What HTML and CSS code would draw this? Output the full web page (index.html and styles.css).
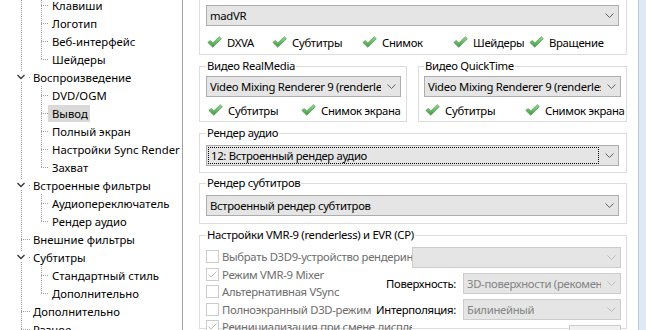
FILE: index.html
```html
<!DOCTYPE html>
<html>
<head>
    <title>Вывод</title>
    <link rel="stylesheet" href="styles.css">
</head>
<body>
    <svg class="defs" width="0" height="0">
        <defs>
            <linearGradient id="tickFill" x1="0" y1="0" x2="0" y2="1">
                <stop offset="0" stop-color="#93d893"/>
                <stop offset="1" stop-color="#409c40"/>
            </linearGradient>
            <symbol id="tick" viewBox="0 0 15 12">
                <path d="M0.8 6.4 L3.3 4.4 L5.8 6.9 L12.3 0.7 L14.4 2.7 L5.8 11.3 Z" fill="url(#tickFill)" stroke="#3f8f3f" stroke-width="0.6" stroke-linejoin="round"/>
            </symbol>
            <symbol id="arrow" viewBox="0 0 9 5">
                <path d="M0.5 0.5 L4.5 4.5 L8.5 0.5" fill="none" stroke="currentColor" stroke-width="1"/>
            </symbol>
            <symbol id="expand" viewBox="0 0 13 10">
                <path d="M2.5 3 L6 6.5 L9.5 3" fill="none" stroke="#3a3a3a" stroke-width="1.4"/>
            </symbol>
        </defs>
    </svg>

    <div class="tree">
        <div class="tree-list">
            <div class="row"><span class="guide lv1 pass"></span><span class="guide lv2 tee"></span><span class="item">Клавиши</span></div>
            <div class="row"><span class="guide lv1 pass"></span><span class="guide lv2 tee"></span><span class="item">Логотип</span></div>
            <div class="row"><span class="guide lv1 pass"></span><span class="guide lv2 tee"></span><span class="item">Веб-интерфейс</span></div>
            <div class="row"><span class="guide lv1 pass"></span><span class="guide lv2 end"></span><span class="item">Шейдеры</span></div>
            <div class="row"><span class="guide lv1 tee"><svg class="exp"><use href="#expand"/></svg></span><span class="item top">Воспроизведение</span></div>
            <div class="row"><span class="guide lv1 pass"></span><span class="guide lv2 tee"></span><span class="item">DVD/OGM</span></div>
            <div class="row"><span class="guide lv1 pass"></span><span class="guide lv2 tee"></span><span class="item selected">Вывод</span></div>
            <div class="row"><span class="guide lv1 pass"></span><span class="guide lv2 tee"></span><span class="item">Полный экран</span></div>
            <div class="row"><span class="guide lv1 pass"></span><span class="guide lv2 tee"></span><span class="item">Настройки Sync Render</span></div>
            <div class="row"><span class="guide lv1 pass"></span><span class="guide lv2 end"></span><span class="item">Захват</span></div>
            <div class="row"><span class="guide lv1 tee"><svg class="exp"><use href="#expand"/></svg></span><span class="item top">Встроенные фильтры</span></div>
            <div class="row"><span class="guide lv1 pass"></span><span class="guide lv2 tee"></span><span class="item">Аудиопереключатель</span></div>
            <div class="row"><span class="guide lv1 pass"></span><span class="guide lv2 end"></span><span class="item">Рендер аудио</span></div>
            <div class="row"><span class="guide lv1 tee"></span><span class="item top">Внешние фильтры</span></div>
            <div class="row"><span class="guide lv1 tee"><svg class="exp"><use href="#expand"/></svg></span><span class="item top">Субтитры</span></div>
            <div class="row"><span class="guide lv1 pass"></span><span class="guide lv2 tee"></span><span class="item">Стандартный стиль</span></div>
            <div class="row"><span class="guide lv1 pass"></span><span class="guide lv2 end"></span><span class="item">Дополнительно</span></div>
            <div class="row"><span class="guide lv1 tee"></span><span class="item top">Дополнительно</span></div>
            <div class="row"><span class="guide lv1 tee"></span><span class="item top">Разное</span></div>
        </div>
    </div>

    <div class="page">
        <fieldset class="group first">
            <legend>Видео DirectShow</legend>
            <div class="combo"><span class="val">madVR</span><svg class="arrow"><use href="#arrow"/></svg></div>
            <div class="checks five">
                <span class="ok"><svg class="tick"><use href="#tick"/></svg>DXVA</span>
                <span class="ok"><svg class="tick"><use href="#tick"/></svg>Субтитры</span>
                <span class="ok"><svg class="tick"><use href="#tick"/></svg>Снимок</span>
                <span class="ok"><svg class="tick"><use href="#tick"/></svg>Шейдеры</span>
                <span class="ok"><svg class="tick"><use href="#tick"/></svg>Вращение</span>
            </div>
        </fieldset>

        <div class="pair">
            <fieldset class="group half">
                <legend>Видео RealMedia</legend>
                <div class="combo"><span class="val">Video Mixing Renderer 9 (renderless)</span><svg class="arrow"><use href="#arrow"/></svg></div>
                <div class="checks two rm">
                    <span class="ok"><svg class="tick"><use href="#tick"/></svg>Субтитры</span>
                    <span class="ok"><svg class="tick"><use href="#tick"/></svg>Снимок экрана</span>
                </div>
            </fieldset>
            <fieldset class="group half qt">
                <legend>Видео QuickTime</legend>
                <div class="combo"><span class="val">Video Mixing Renderer 9 (renderless)</span><svg class="arrow"><use href="#arrow"/></svg></div>
                <div class="checks two">
                    <span class="ok"><svg class="tick"><use href="#tick"/></svg>Субтитры</span>
                    <span class="ok"><svg class="tick"><use href="#tick"/></svg>Снимок экрана</span>
                </div>
            </fieldset>
        </div>

        <fieldset class="group single audio">
            <legend>Рендер аудио</legend>
            <div class="combo focused"><span class="val">12: Встроенный рендер аудио</span><svg class="arrow"><use href="#arrow"/></svg></div>
        </fieldset>

        <fieldset class="group single subs">
            <legend>Рендер субтитров</legend>
            <div class="combo"><span class="val">Встроенный рендер субтитров</span><svg class="arrow"><use href="#arrow"/></svg></div>
        </fieldset>

        <fieldset class="group vmr">
            <legend>Настройки VMR-9 (renderless) и EVR (CP)</legend>
            <div class="vmr-grid">
                <div class="cb-list">
                    <div class="cb"><span class="box"></span>Выбрать D3D9-устройство рендеринга</div>
                    <div class="cb"><span class="box"><svg class="mark" viewBox="0 0 11 11"><path d="M1.5 5.5 L4 8 L9.5 2.5" fill="none" stroke="#bcbcbc" stroke-width="1"/></svg></span>Режим VMR-9 Mixer</div>
                    <div class="cb"><span class="box"></span>Альтернативная VSync</div>
                    <div class="cb"><span class="box"></span>Полноэкранный D3D-режим</div>
                    <div class="cb"><span class="box"><svg class="mark" viewBox="0 0 11 11"><path d="M1.5 5.5 L4 8 L9.5 2.5" fill="none" stroke="#bcbcbc" stroke-width="1"/></svg></span>Реинициализация при смене дисплея</div>
                </div>
                <div class="opts">
                    <div class="combo off"><span class="val"></span><svg class="arrow"><use href="#arrow"/></svg></div>
                    <div class="opt">
                        <span class="opt-label">Поверхность:</span>
                        <div class="combo off"><span class="val">3D-поверхности (рекомендуется)</span><svg class="arrow"><use href="#arrow"/></svg></div>
                    </div>
                    <div class="opt">
                        <span class="opt-label">Интерполяция:</span>
                        <div class="combo off"><span class="val">Билинейный</span><svg class="arrow"><use href="#arrow"/></svg></div>
                    </div>
                    <div class="opt buffers">
                        <span class="opt-label faint">Буферы EVR:</span>
                        <div class="spin"></div>
                    </div>
                </div>
            </div>
        </fieldset>
    </div>

    <div class="edge"></div>
</body>
</html>
```

FILE: styles.css
```css
/* Options dialog, "Вывод" page */
body {
    margin: 0;
    width: 646px;
    height: 330px;
    overflow: hidden;
    display: flex;
    background: #fff;
    font-family: "Noto Sans", sans-serif;
    font-size: 11.3px;
    color: #000;
}

.defs {
    flex: none;
    width: 0;
    height: 0;
}

/* tree */
.tree {
    flex: none;
    width: 182px;
    border-right: 1px solid #a0a0a0;
}

.tree-list {
    margin-top: -4px;
    padding-left: 11px;
}

.row {
    display: flex;
    align-items: center;
    height: 18px;
    white-space: nowrap;
}

.guide {
    flex: none;
    height: 18px;
    display: flex;
    align-items: center;
    background-repeat: no-repeat;
    --dv: repeating-linear-gradient(to bottom, #a0a0a0 0 1px, transparent 1px 2px);
    --dh: repeating-linear-gradient(to right, #a0a0a0 0 1px, transparent 1px 2px);
}

.guide.lv1 {
    width: 19px;
    --x: 10px;
}

.guide.lv2 {
    width: 18px;
    --x: 11px;
}

.guide.pass {
    background-image: var(--dv);
    background-size: 1px 100%;
    background-position: var(--x) 0;
}

.guide.tee {
    background-image: var(--dv), var(--dh);
    background-size: 1px 100%, 100% 1px;
    background-position: var(--x) 0, var(--x) 9px;
}

.guide.end {
    background-image: var(--dv), var(--dh);
    background-size: 1px 9px, 100% 1px;
    background-position: var(--x) 0, var(--x) 9px;
}

.exp {
    width: 13px;
    height: 10px;
    margin-left: 4px;
    background: #fff;
}

.item {
    height: 17px;
    line-height: 17px;
    padding: 0 2px 0 4px;
}

.item.top {
    padding-left: 3px;
}

.item.selected {
    background: #d9d9d9;
}

/* right page */
.page {
    flex: none;
    width: 428px;
    margin-left: 16px;
    letter-spacing: -0.3px;
}

.group {
    margin: 3px 0 0;
    padding: 0 7px 0 6px;
    border: 1px solid #dcdcdc;
    min-width: 0;
}

.group legend {
    padding: 0 1px;
    line-height: 16px;
}

.group.first {
    margin-top: -15px;
    padding-bottom: 3px;
}

.group.first > .combo {
    margin-top: 4px;
}

.pair {
    display: flex;
    gap: 11px;
    margin-top: 3px;
}

.group.half {
    width: 208px;
    box-sizing: border-box;
    margin: 0;
    padding: 0 5px 2px 6px;
}

.group.half.qt {
    width: 209px;
    padding-left: 5px;
}

.group.single .combo {
    margin-top: 4px;
}

.group.audio {
    padding-bottom: 6px;
}

.group.subs {
    margin-top: 2px;
    padding-bottom: 7px;
}

.group.vmr {
    padding-right: 5px;
    height: 100px;
}

/* combo boxes */
.combo {
    display: flex;
    align-items: center;
    height: 21px;
    box-sizing: border-box;
    margin-top: 2px;
    padding-left: 3px;
    border: 1px solid #adadad;
    background: #e5e5e5;
    color: #000;
}

.combo .val {
    flex: 1;
    overflow: hidden;
    white-space: nowrap;
}

.combo .arrow {
    flex: none;
    width: 9px;
    height: 5px;
    margin: 0 4px 0 6px;
    color: #606060;
}

.combo.focused {
    padding-left: 1px;
}

.combo.focused .val {
    height: 17px;
    line-height: 15px;
    box-sizing: border-box;
    padding-left: 2px;
    border: 1px dotted #000;
}

.combo.off {
    border-color: #cccccc;
    color: #838383;
}

.combo.off .arrow {
    color: #bdbdbd;
}

/* checkmark rows */
.checks {
    display: grid;
    align-items: center;
    height: 18px;
    margin-top: 4px;
    padding-left: 1px;
}

.checks.five {
    margin-top: 7px;
    grid-template-columns: 65px 90px 91px 76px auto;
}

.checks.two {
    grid-template-columns: 100px auto;
}

.checks.two.rm {
    padding-left: 2px;
    grid-template-columns: 93px auto;
}

.ok {
    display: flex;
    align-items: center;
    white-space: nowrap;
}

.tick {
    flex: none;
    width: 15px;
    height: 12px;
    margin-right: 5px;
}

/* VMR-9 settings */
.vmr-grid {
    display: grid;
    grid-template-columns: 206px minmax(0, 1fr);
}

.cb-list {
    margin-top: 5px;
}

.cb {
    display: flex;
    align-items: center;
    height: 17.5px;
    overflow: hidden;
    white-space: nowrap;
    color: #6d6d6d;
}

.box {
    flex: none;
    width: 13px;
    height: 13px;
    box-sizing: border-box;
    margin-right: 3px;
    border: 1px solid #cccccc;
    background: #fff;
}

.mark {
    display: block;
    width: 11px;
    height: 11px;
}

.opts {
    display: flex;
    flex-direction: column;
    gap: 5px;
    min-width: 0;
}

.opts > .combo {
    margin-top: 4px;
}

.opt {
    display: flex;
    justify-content: flex-end;
    align-items: center;
    gap: 7px;
}

.opt .combo {
    flex: none;
    width: 158px;
    margin: 0;
}

.opt-label {
    flex: none;
    white-space: nowrap;
}

.opt-label.faint {
    color: #a8a8a8;
}

.opt.buffers {
    gap: 12px;
}

.spin {
    flex: none;
    width: 52px;
    height: 21px;
    box-sizing: border-box;
    border: 1px solid #cccccc;
    background: #f0f0f0;
}

.edge {
    flex: 1;
    margin-left: 11px;
    border-left: 1px solid #b7c7d9;
    background: #dfe9f5;
}
```
